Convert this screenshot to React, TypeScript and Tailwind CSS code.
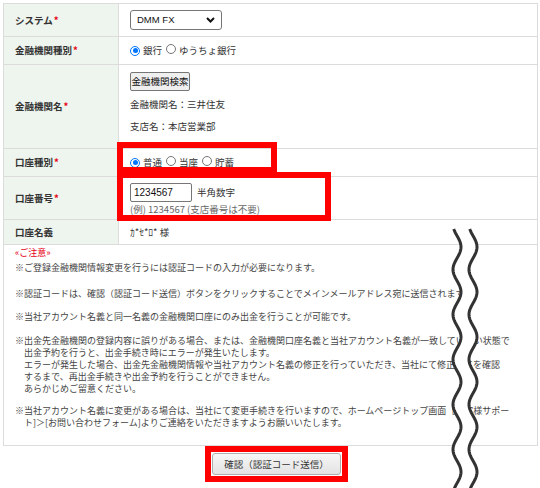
import React from "react";

const wavePts = (x0: number, rev = false) => {
  const pts: string[] = [];
  for (let y = 229; y <= 490; y += 1) {
    const x = x0 + 4 * Math.sin((2 * Math.PI * (y - 235.75)) / 45);
    pts.push(`${(x - 440).toFixed(2)},${(y - 225).toFixed(2)}`);
  }
  return rev ? pts.reverse() : pts;
};

const Radio = ({ checked }: { checked?: boolean }) =>
  checked ? (
    <span className="inline-flex w-[10px] h-[10px] shrink-0 rounded-full border-[1.5px] border-[#0075ff] items-center justify-center bg-white">
      <span className="w-[5px] h-[5px] rounded-full bg-[#0075ff]" />
    </span>
  ) : (
    <span className="inline-block w-[10px] h-[10px] shrink-0 rounded-full border border-[#767676] bg-white" />
  );

const Req = () => <span className="text-[#e60012] ml-[1px]">*</span>;

const Row = ({
  label,
  req,
  h,
  children,
  valueClass = "flex items-center",
}: {
  label: string;
  req?: boolean;
  h: string;
  children: React.ReactNode;
  valueClass?: string;
}) => (
  <div className={`flex border-b border-[#dcdcdc] ${h}`}>
    <div className="w-[115px] shrink-0 bg-[#eef4ee] border-r border-[#dcdcdc] flex items-center pl-[11px] font-bold text-[9.5px] text-[#333]">
      {label}
      {req && <Req />}
    </div>
    <div className={`flex-1 pl-[11px] text-[9.5px] text-[#333] ${valueClass}`}>{children}</div>
  </div>
);

export default function App() {
  const l1 = wavePts(457);
  const l2 = wavePts(473);
  const fill = [...l1, ...wavePts(473, true)].join(" ");
  return (
    <div
      className="relative w-[540px] h-[488px] bg-white overflow-hidden"
      style={{ fontFamily: '"Noto Sans CJK JP", "Noto Sans", sans-serif' }}
    >
      <div className="ml-[3px] mt-[3px] w-[535px] border border-[#dcdcdc]">
        <Row label="システム" req h="h-[33px]">
          <div className="w-[92px] h-[20px] border border-[#767676] rounded-[3px] flex items-center justify-between pl-[6px] pr-[6px] bg-white">
            <span className="text-[9.5px] text-[#111]" style={{ fontFamily: '"Liberation Sans", sans-serif' }}>DMM FX</span>
            <svg width="9" height="6" viewBox="0 0 9 6">
              <polyline points="1,1 4.5,4.5 8,1" fill="none" stroke="#111" strokeWidth="2" />
            </svg>
          </div>
        </Row>
        <Row label="金融機関種別" req h="h-[28px]">
          <div className="flex items-center gap-[3px]">
            <Radio checked />
            <span>銀行</span>
            <span className="ml-[1px]"><Radio /></span>
            <span>ゆうちょ銀行</span>
          </div>
        </Row>
        <Row label="金融機関名" req h="h-[84px]" valueClass="flex flex-col items-start pt-[7px]">
          <div className="h-[19px] w-[60px] border border-[#767676] rounded-[2px] bg-[#efefef] flex items-center justify-center text-[9.5px] text-[#111]">
            金融機関検索
          </div>
          <div className="mt-[7px] leading-[12px]">金融機関名：三井住友</div>
          <div className="mt-[10px] leading-[12px]">支店名：本店営業部</div>
        </Row>
        <Row label="口座種別" req h="h-[28px]">
          <div className="flex items-center gap-[3px]">
            <Radio checked />
            <span>普通</span>
            <span className="ml-[1px]"><Radio /></span>
            <span>当座</span>
            <span className="ml-[1px]"><Radio /></span>
            <span>貯蓄</span>
          </div>
        </Row>
        <Row label="口座番号" req h="h-[43px]" valueClass="flex flex-col items-start pt-[6px]">
          <div className="flex items-center gap-[5px]">
            <div className="h-[19px] w-[62px] border border-[#767676] rounded-[2px] flex items-center pl-[3px] text-[10px] text-[#111]" style={{ fontFamily: '"Liberation Sans", sans-serif' }}>
              1234567
            </div>
            <span>半角数字</span>
          </div>
          <div className="mt-[1px] leading-[12px] text-[#666]">(例) 1234567 (支店番号は不要)</div>
        </Row>
        <Row label="口座名義" h="h-[25px]">
          <span>ｶ*ｾ*ﾛ* 様</span>
        </Row>
        <div className="h-[200px] pl-[11px] pt-[2px] text-[9px] leading-[12px] text-[#444] whitespace-nowrap">
          <div className="text-[#e60012]">«ご注意»</div>
          <div className="mt-[3px]">※ご登録金融機関情報変更を行うには認証コードの入力が必要になります。</div>
          <div className="mt-[14px]">※認証コードは、確認（認証コード送信）ボタンをクリックすることでメインメールアドレス宛に送信されます。</div>
          <div className="mt-[11px]">※当社アカウント名義と同一名義の金融機関口座にのみ出金を行うことが可能です。</div>
          <div className="mt-[12px] pl-[9px] -indent-[9px]">
            ※出金先金融機関の登録内容に誤りがある場合、または、金融機関口座名義と当社アカウント名義が一致していない状態で
            <br />
            出金予約を行うと、出金手続き時にエラーが発生いたします。
            <br />
            エラーが発生した場合、出金先金融機関情報や当社アカウント名義の修正を行っていただき、当社にて修正完了を確認
            <br />
            するまで、再出金手続きや出金予約を行うことができません。
            <br />
            あらかじめご留意ください。
          </div>
          <div className="mt-[10px] pl-[9px] -indent-[9px]">
            ※当社アカウント名義に変更がある場合は、当社にて変更手続きを行いますので、ホームページトップ画面［お客様サポー
            <br />
            ト]＞[お問い合わせフォーム]よりご連絡をいただきますようお願いいたします。
          </div>
        </div>
      </div>

      <div className="ml-[205px] w-[143px] h-[36px] border-[6px] border-[#ff0000] p-[1px]">
        <div className="w-full h-full border border-[#adadad] rounded-[3px] bg-gradient-to-b from-[#f6f6f6] to-[#e3e3e3] flex items-center justify-center text-[9.5px] text-[#333]">
          確認（認証コード送信）
        </div>
      </div>

      <div className="absolute left-[117px] top-[142px] w-[160px] h-[31px] border-[6px] border-[#ff0000]" />
      <div className="absolute left-[117px] top-[172px] w-[214px] h-[49px] border-[6px] border-[#ff0000]" />

      <svg className="absolute left-[440px] top-[225px]" width="50" height="265" viewBox="0 0 50 265">
        <polygon points={fill} fill="#ffffff" />
        <polyline points={l1.join(" ")} fill="none" stroke="#333" strokeWidth="3" />
        <polyline points={l2.join(" ")} fill="none" stroke="#333" strokeWidth="3" />
      </svg>
    </div>
  );
}
